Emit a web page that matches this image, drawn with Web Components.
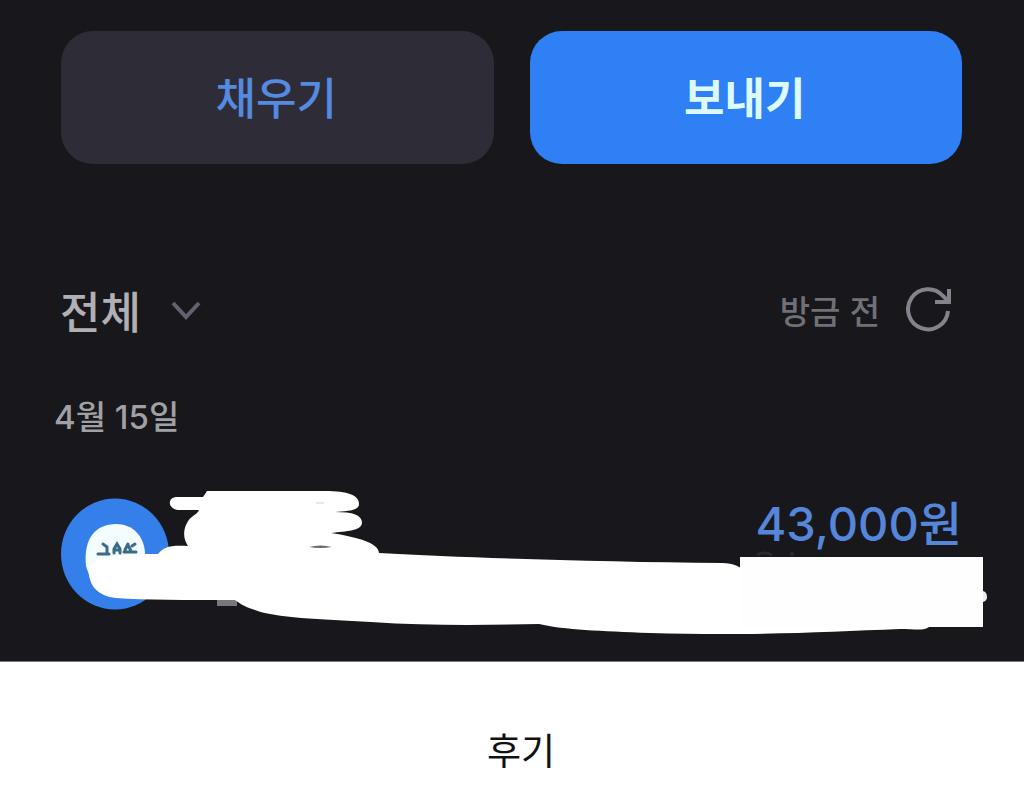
<!DOCTYPE html>
<html lang="ko">
<head>
<meta charset="utf-8">
<meta name="viewport" content="width=device-width, initial-scale=1">
<title>후기</title>
<style>
  body { margin: 0; background: #fff; font-family: Inter, "Noto Sans CJK KR", sans-serif; }
</style>
</head>
<body>
<review-page></review-page>
<script>
const define = (name, html) => customElements.define(name, class extends HTMLElement {
  constructor() {
    super();
    const t = document.createElement('template');
    t.innerHTML = html;
    this.attachShadow({ mode: 'open' }).append(t.content.cloneNode(true));
  }
});

define('wallet-button', `
  <style>
    :host { display: block; flex: 1; }
    button { display: block; width: 100%; height: 133px; padding: 0 2px 4px 0; border: 0; border-radius: 32px;
      background: #2e2d37; color: #5689e0; font: 500 44px/64px "Noto Sans CJK KR", sans-serif; }
    :host([primary]) button { background: #2f80f5; color: #dcfbff; font-weight: 700; }
  </style>
  <button type="button"><slot></slot></button>`);

define('history-filter', `
  <style>
    :host { display: flex; justify-content: space-between; align-items: center; height: 60px; padding: 0 12px 0 0; }
    label { display: flex; align-items: center; position: relative; }
    select { appearance: none; border: 0; margin: 0; padding: 0 60px 0 0; background: transparent; color: #b0b0b5;
      font: 500 44px/60px "Noto Sans CJK KR", sans-serif; height: 60px; }
    label svg { position: absolute; right: 0; width: 32px; height: 24px; pointer-events: none; }
    .updated { display: flex; align-items: center; gap: 26px; color: #707077; font: 500 33px/48px "Noto Sans CJK KR", sans-serif; }
    button { display: block; padding: 0; border: 0; background: none; color: #83838b; width: 46px; height: 48px; }
    path { fill: none; stroke: currentColor; }
  </style>
  <label>
    <select aria-label="거래 종류"><option>전체</option></select>
    <svg viewBox="0 0 32 24" color="#636270" aria-hidden="true"><path d="M4 5 L17 19 L30 5" stroke-width="4"/></svg>
  </label>
  <div class="updated">
    <span>방금 전</span>
    <button type="button" aria-label="새로고침">
      <svg width="46" height="48" viewBox="0 0 46 48" aria-hidden="true">
        <path d="M42 25 A20 20 0 1 1 37 10 L42 15" stroke-width="4"/>
        <path d="M43 3 V16 H29" stroke-width="4"/>
      </svg>
    </button>
  </div>`);

define('history-date', `
  <style>
    :host { display: block; }
    h2 { margin: 0; font-weight: 500; font-size: 33px; line-height: 48px; color: #a0a0a5; }
  </style>
  <h2><slot></slot></h2>`);

define('history-item', `
  <style>
    :host { display: flex; position: relative; justify-content: space-between; align-items: flex-start; height: 164px; padding: 0 62px 0 60px; }
    .avatar { width: 110px; height: 112px; margin-top: 18px; }
    .amount { margin-top: 16px; font-weight: 500; font-size: 47px; line-height: 56px; color: #5586d9; }
    .cover { position: absolute; left: 0; top: 0; width: 100%; height: 100%; }
  </style>
  <svg class="avatar" viewBox="0 0 110 112" aria-hidden="true">
    <ellipse cx="55" cy="56" rx="54" ry="55.5" fill="#347fe9"/>
    <path d="M26 68 C23 40 36 26 56 26 C73 26 84 38 85 55 V80 H30Z" fill="#f3fcff"/>
    <path d="M38 56 H49 M43 46 L47 49 V55 M54 55 V51 L57 46 L60 51 V55 M55 52 H60 M68 46 L65 52 M68 47 L71 53 M64 54 H76 M72 48 L75 46" fill="none" stroke="#3d6b86" stroke-width="3" stroke-linecap="round"/>
  </svg>
  <span class="amount"><slot></slot></span>
  <svg class="cover" viewBox="0 480 1024 164" preserveAspectRatio="none" aria-hidden="true">
    <path d="M757 555 Q764 551 772 555 M792 556 V552" fill="none" stroke="#29292f" stroke-width="3"/>
    <path d="M217 599 H237 V606 H217Z" fill="#77777c"/>
    <path fill="#fff" d="M176 497 H203 L207 491 H325 C348 491 359 495 359 504 C359 511 347 511 335 512 C353 512 362 515 362 523 C361 531 347 531 331 533 C357 537 379 543 379 553 C470 558 600 562 722 563 C734 563 740 567 745 571 V627 H929 C924 631 915 629 900 629 C825 632 750 636 650 633 C600 631 565 630 539 624 C489 625 430 626 371 622 C320 619 275 618 255 610 C242 606 240 603 235 600 C185 600 145 600 116 598 C98 596 88 586 89 569 C93 559 110 555 145 554 H158 C164 547 169 545 188 546 C183 539 183 530 187 523 C190 516 197 515 199 510 H178 C168 509 167 498 176 497Z"/>
    <path d="M309 547 Q320 544 332 547 Q320 549 309 547Z" fill="#696969"/>
    <path d="M316 503 H324" stroke="#e8e8e8" stroke-width="2"/>
    <path fill="#fefefe" d="M740 557 H983 V627 H740Z"/>
    <path fill="#eee" d="M983 591 Q987 592 987 597 Q987 601 983 602Z"/>
  </svg>`);

define('wallet-panel', `
  <style>
    :host { display: block; background: #18171c; border-bottom: 1px solid #77767b; padding-top: 31px; }
    .actions { display: flex; gap: 36px; padding: 0 62px 0 61px; }
    history-filter { margin: 116px 60px 0; }
    history-date { margin: 53px 54px 0; }
    history-item { margin-top: 39px; }
    .end { height: 17px; }
  </style>
  <div class="actions">
    <wallet-button>채우기</wallet-button>
    <wallet-button primary>보내기</wallet-button>
  </div>
  <history-filter></history-filter>
  <history-date>4월 15일</history-date>
  <history-item>43,000원</history-item>
  <div class="end"></div>`);

define('review-page', `
  <style>
    :host { display: block; }
    h1 { margin: 0; padding: 60px 0 20px 18px; text-align: center; color: #111; font: 400 37px/54px "Noto Sans CJK KR", sans-serif; }
  </style>
  <wallet-panel></wallet-panel>
  <h1>후기</h1>`);
</script>
</body>
</html>
